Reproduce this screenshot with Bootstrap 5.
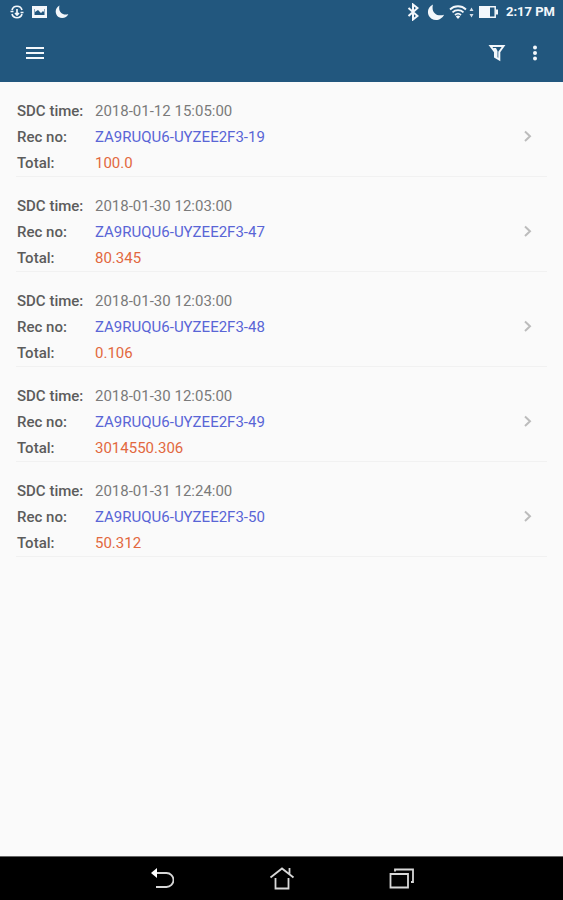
<!DOCTYPE html>
<html lang="en">
<head>
<meta charset="utf-8">
<meta name="viewport" content="width=device-width, initial-scale=1">
<title>Receipts</title>
<link href="https://cdn.jsdelivr.net/npm/bootstrap@5.3.0/dist/css/bootstrap.min.css" rel="stylesheet">
<style>
  body { font-family: Roboto, "Liberation Sans", sans-serif; font-size: 15px; line-height: 26px; background: #fafafa; }
  svg { display: block; }
  .app-top { background: #22577e; color: #f3f7fb; }
  .status-bar { height: 24px; padding: 0 8px 0 10px; font-size: 13px; line-height: 24px; }
  .status-icons { gap: 8px; }
  .status-time { font-weight: 700; }
  .tool-bar { height: 58px; padding: 0 9px 0 16px; }
  .tool-btn { width: 38px; height: 38px; color: inherit; }
  .receipts { padding: 0 16px; }
  .receipt { padding: 16px 9px 0 1px; border-bottom: 1px solid #f1f1f1; color: #7a7a7a; }
  .receipt dt { width: 78px; color: #5c5c5c; font-weight: 500; }
  .receipt dd { margin: 0; }
  .receipt .rec-no { color: #5965d6; }
  .receipt .rec-total { color: #e2683e; }
  .nav-keys { height: 44px; background: #000; border-top: 1px solid #666; gap: 80px; }
  .nav-key { width: 40px; height: 40px; color: #d8d8d8; }
</style>
<script src="https://cdn.jsdelivr.net/npm/bootstrap@5.3.0/dist/js/bootstrap.bundle.min.js" defer></script>
</head>
<body class="d-flex flex-column min-vh-100">
<header class="app-top">
  <div class="status-bar d-flex align-items-center justify-content-between">
    <div class="status-icons d-flex align-items-center">
      <svg width="14" height="14" viewBox="0 0 14 14" fill="none" stroke="currentColor" stroke-width="1.700"><path d="M2 5a5.200 5.200 0 0 1 10 0M12 9A5.200 5.200 0 0 1 2 9M7 4v6M5 8l2 2 2-2M.5 6.500h3M10.500 7.500h3"/></svg>
      <svg width="15" height="14" viewBox="0 0 15 14"><path fill="currentColor" fill-rule="evenodd" d="M0 1h15v12H0zM2.500 4v6h10V4z"/><path fill="currentColor" d="M3 4h9v3l-1-1-2 2-3-3-3 2z"/></svg>
      <svg width="14" height="14" viewBox="0 0 14 14" fill="currentColor"><path d="M4.500.5C-.5 3-.3 9.500 3.500 12c3.800 2.300 8.500.5 9.800-3C8 11 2.800 7 4.500.5z"/></svg>
    </div>
    <div class="d-flex align-items-center">
      <svg class="me-2" width="12" height="18" viewBox="0 0 12 18" fill="none" stroke="currentColor" stroke-width="2"><path d="M1.500 5l9 8L6 16.500v-15L10.500 5l-9 8"/></svg>
      <svg class="me-1" width="18" height="18" viewBox="0 0 18 18" fill="currentColor"><path d="M6 1.500C-.5 4.500-.5 12.500 4.500 15.700c4.800 3 10.500.6 12.500-4C10 14 3.800 9.500 6 1.500z"/></svg>
      <svg width="18" height="16" viewBox="0 0 18 16" fill="none" stroke="currentColor" stroke-width="1.800"><path d="M1 5.500a11.500 11.500 0 0 1 16 0M3.500 8.300a8 8 0 0 1 11 0M6 11a4.500 4.500 0 0 1 6 0"/><path fill="currentColor" stroke="none" d="M6.800 12.500L9 15l2.200-2.500a3.500 3.500 0 0 0-4.400 0z"/></svg>
      <svg class="me-1" width="8" height="14" viewBox="0 0 8 14" fill="currentColor"><path opacity=".85" d="M2.500 6h4l-2-3.500zM2.500 9h4l-2 3.500z"/></svg>
      <svg class="me-2" width="19" height="14" viewBox="0 0 19 14"><path fill="currentColor" d="M0 1h11v12H0zM17 4.500h2v5h-2z"/><path fill="none" stroke="currentColor" stroke-width="1.500" d="M11 1.800h5.200v10.400H11"/></svg>
      <span class="status-time">2:17 PM</span>
    </div>
  </div>
  <div class="tool-bar d-flex align-items-center">
    <button class="tool-btn btn border-0 p-0 d-flex align-items-center justify-content-center" type="button" aria-label="Menu">
      <svg width="20" height="16" viewBox="0 0 20 16" stroke="currentColor" stroke-width="2"><path d="M1 3h18M1 8h18M1 13h18"/></svg>
    </button>
    <button class="tool-btn btn border-0 p-0 d-flex align-items-center justify-content-center ms-auto" type="button" aria-label="Filter">
      <svg width="18" height="20" viewBox="0 0 18 20"><path fill="none" stroke="currentColor" stroke-width="2" d="M2.500 3h13l-4.200 6v7.500L7 14V9z"/><path fill="currentColor" d="M5 5h3l1.500 3v7L7 14V9z"/></svg>
    </button>
    <button class="tool-btn btn border-0 p-0 d-flex align-items-center justify-content-center" type="button" aria-label="More options">
      <svg width="6" height="18" viewBox="0 0 6 18" fill="currentColor"><circle cx="3" cy="3.500" r="2"/><circle cx="3" cy="9" r="2"/><circle cx="3" cy="14.500" r="2"/></svg>
    </button>
  </div>
</header>

<main class="receipts flex-grow-1">
  <a href="#" class="receipt d-flex align-items-center justify-content-between text-decoration-none">
    <dl class="mb-0">
      <div class="d-flex"><dt>SDC time:</dt><dd>2018-01-12 15:05:00</dd></div>
      <div class="d-flex"><dt>Rec no:</dt><dd class="rec-no">ZA9RUQU6-UYZEE2F3-19</dd></div>
      <div class="d-flex"><dt>Total:</dt><dd class="rec-total">100.0</dd></div>
    </dl>
    <svg width="20" height="14" viewBox="0 0 20 14" fill="none" stroke="#bcbcbc" stroke-width="2"><path d="M7 1.500l5 4.700-5 4.700"/></svg>
  </a>
  <a href="#" class="receipt d-flex align-items-center justify-content-between text-decoration-none">
    <dl class="mb-0">
      <div class="d-flex"><dt>SDC time:</dt><dd>2018-01-30 12:03:00</dd></div>
      <div class="d-flex"><dt>Rec no:</dt><dd class="rec-no">ZA9RUQU6-UYZEE2F3-47</dd></div>
      <div class="d-flex"><dt>Total:</dt><dd class="rec-total">80.345</dd></div>
    </dl>
    <svg width="20" height="14" viewBox="0 0 20 14" fill="none" stroke="#bcbcbc" stroke-width="2"><path d="M7 1.500l5 4.700-5 4.700"/></svg>
  </a>
  <a href="#" class="receipt d-flex align-items-center justify-content-between text-decoration-none">
    <dl class="mb-0">
      <div class="d-flex"><dt>SDC time:</dt><dd>2018-01-30 12:03:00</dd></div>
      <div class="d-flex"><dt>Rec no:</dt><dd class="rec-no">ZA9RUQU6-UYZEE2F3-48</dd></div>
      <div class="d-flex"><dt>Total:</dt><dd class="rec-total">0.106</dd></div>
    </dl>
    <svg width="20" height="14" viewBox="0 0 20 14" fill="none" stroke="#bcbcbc" stroke-width="2"><path d="M7 1.500l5 4.700-5 4.700"/></svg>
  </a>
  <a href="#" class="receipt d-flex align-items-center justify-content-between text-decoration-none">
    <dl class="mb-0">
      <div class="d-flex"><dt>SDC time:</dt><dd>2018-01-30 12:05:00</dd></div>
      <div class="d-flex"><dt>Rec no:</dt><dd class="rec-no">ZA9RUQU6-UYZEE2F3-49</dd></div>
      <div class="d-flex"><dt>Total:</dt><dd class="rec-total">3014550.306</dd></div>
    </dl>
    <svg width="20" height="14" viewBox="0 0 20 14" fill="none" stroke="#bcbcbc" stroke-width="2"><path d="M7 1.500l5 4.700-5 4.700"/></svg>
  </a>
  <a href="#" class="receipt d-flex align-items-center justify-content-between text-decoration-none">
    <dl class="mb-0">
      <div class="d-flex"><dt>SDC time:</dt><dd>2018-01-31 12:24:00</dd></div>
      <div class="d-flex"><dt>Rec no:</dt><dd class="rec-no">ZA9RUQU6-UYZEE2F3-50</dd></div>
      <div class="d-flex"><dt>Total:</dt><dd class="rec-total">50.312</dd></div>
    </dl>
    <svg width="20" height="14" viewBox="0 0 20 14" fill="none" stroke="#bcbcbc" stroke-width="2"><path d="M7 1.500l5 4.700-5 4.700"/></svg>
  </a>
</main>

<nav class="nav-keys d-flex align-items-center justify-content-center" aria-label="System">
  <button class="nav-key btn border-0 p-0 d-flex align-items-center justify-content-center" type="button" aria-label="Back">
    <svg width="24" height="24" viewBox="0 0 24 24" fill="none" stroke="currentColor" stroke-width="1.800"><path d="M5 6h11.500a6.500 6.500 0 0 1 0 14H6"/><path fill="#fff" stroke="none" d="M7 1v10L1 6z"/></svg>
  </button>
  <button class="nav-key btn border-0 p-0 d-flex align-items-center justify-content-center" type="button" aria-label="Home">
    <svg width="26" height="24" viewBox="0 0 26 24" fill="none" stroke="currentColor" stroke-width="1.800"><path d="M1.500 10.500L13 1.500l11.500 9M20.500 1v6.500M6.500 11v10.500h13V11"/></svg>
  </button>
  <button class="nav-key btn border-0 p-0 d-flex align-items-center justify-content-center" type="button" aria-label="Recent apps">
    <svg width="26" height="24" viewBox="0 0 26 24" fill="none" stroke="currentColor" stroke-width="1.800"><path d="M1.500 7h17.500v13.500H1.500zM6 4.500V2.500H24v12.500H22"/></svg>
  </button>
</nav>
</body>
</html>
